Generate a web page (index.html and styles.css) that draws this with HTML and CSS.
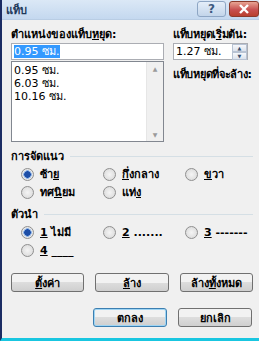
FILE: index.html
```html
<!DOCTYPE html>
<html lang="th">
<head>
    <meta charset="UTF-8">
    <title>แท็บ</title>
    <link rel="stylesheet" href="styles.css">
</head>
<body>
    <div class="window">
        <!-- แถบชื่อ -->
        <div class="titlebar">
            <span class="title">แท็บ</span>
            <div class="caption-btns">
                <div class="cap-btn help">?</div>
                <div class="cap-btn close">
                    <svg width="14" height="10" viewBox="0 0 14 10"><path d="M3 1 L11 9 M11 1 L3 9" stroke="#fff" stroke-width="2.4"/></svg>
                </div>
            </div>
        </div>

        <div class="content">
            <div class="top">
                <div class="col-left">
                    <div class="label">ตำแหน่งของแท็บ<u>ห</u>ยุด:</div>
                    <div class="textbox"><span class="sel">0.95 ซม.</span></div>
                    <div class="listbox">
                        <div class="items">
                            <div>0.95 ซม.</div>
                            <div>6.03 ซม.</div>
                            <div>10.16 ซม.</div>
                        </div>
                        <div class="vscroll">
                            <span class="arr">&#9650;</span>
                            <span class="arr">&#9660;</span>
                        </div>
                    </div>
                </div>
                <div class="col-right">
                    <div class="label">แท็บหยุดเ<u>ริ่</u>มต้น:</div>
                    <div class="spinner">
                        <span class="val">1.27 ซม.</span>
                        <div class="spin-btns">
                            <div class="spin">&#9650;</div>
                            <div class="spin">&#9660;</div>
                        </div>
                    </div>
                    <div class="label clear-label">แท็บหยุดที่จะล้าง:</div>
                </div>
            </div>

            <div class="group-head"><span>การจัดแนว</span><div class="rule"></div></div>
            <div class="radios">
                <label class="radio"><span class="dot on"></span><span>ซ้า<u>ย</u></span></label>
                <label class="radio"><span class="dot"></span><span><u>กึ่</u>งกลาง</span></label>
                <label class="radio"><span class="dot"></span><span><u>ข</u>วา</span></label>
                <label class="radio"><span class="dot"></span><span>ทศ<u>นิ</u>ยม</span></label>
                <label class="radio"><span class="dot"></span><span>แท่<u>ง</u></span></label>
            </div>

            <div class="group-head second"><span>ตัวนำ</span><div class="rule"></div></div>
            <div class="radios">
                <label class="radio"><span class="dot on"></span><span><u>1</u> ไม่มี</span></label>
                <label class="radio"><span class="dot"></span><span><u>2</u> .......</span></label>
                <label class="radio"><span class="dot"></span><span><u>3</u> -------</span></label>
                <label class="radio"><span class="dot"></span><span><u>4</u> ____</span></label>
            </div>

            <div class="btn-row">
                <div class="btn"><span><u>ตั้</u>งค่า</span></div>
                <div class="btn"><span><u>ล้</u>าง</span></div>
                <div class="btn"><span>ล้าง<u>ทั้</u>งหมด</span></div>
            </div>
            <div class="btn-row end">
                <div class="btn focus">ตกลง</div>
                <div class="btn">ยกเลิก</div>
            </div>
        </div>
    </div>
</body>
</html>
```

FILE: styles.css
```css
* { margin: 0; padding: 0; box-sizing: border-box; }
body { width: 259px; height: 341px; overflow: hidden; font-family: Tahoma, "DejaVu Sans", "Noto Sans", sans-serif; font-size: 11px; color: #000; }
u { text-decoration: underline; }

.window { width: 259px; height: 341px; background: #f0f0f0; border-left: 2px solid #1b2c63; border-bottom: 3px solid #19c6e0; display: flex; flex-direction: column; }

.titlebar { height: 20px; background: linear-gradient(#dbe8f6, #c4d8ef); display: flex; align-items: center; justify-content: space-between; padding-left: 4px; border-bottom: 1px solid #b9cde4; }
.title { font-weight: bold; color: #1e395b; font-size: 11px; }
.caption-btns { display: flex; gap: 3px; align-self: flex-start; padding-top: 1px; }
.cap-btn { height: 16px; border-radius: 3px; display: flex; align-items: center; justify-content: center; }
.cap-btn.help { width: 29px; background: linear-gradient(#e4eef9, #c3d5ea); border: 1px solid #8ea6c4; color: #3c5a80; font-weight: bold; font-size: 12px; }
.cap-btn.close { width: 30px; background: linear-gradient(#e8a493, #c75050 55%, #b9402e); border: 1px solid #8b3a2c; }

.content { flex: 1; padding: 8px 6px 0 9px; display: flex; flex-direction: column; }

.top { display: flex; gap: 9px; }
.col-left { width: 153px; flex-shrink: 0; display: flex; flex-direction: column; }
.col-right { flex: 1; display: flex; flex-direction: column; }
.label { font-weight: bold; height: 14px; line-height: 14px; margin-bottom: 1px; white-space: nowrap; }
.col-right .label { letter-spacing: -0.3px; }

.textbox { height: 17px; border: 1px solid #abadb3; background: #fff; padding: 1px 2px; line-height: 13px; }
.sel { background: #3399ff; color: #fff; }

.listbox { height: 81px; margin-top: 1px; border: 1px solid #828790; background: #fff; display: flex; }
.items { flex: 1; padding: 2px 2px; line-height: 13px; }
.vscroll { width: 17px; background: #f0f0f0; border-left: 1px solid #e6e6e6; display: flex; flex-direction: column; justify-content: space-between; align-items: center; padding: 3px 0; }
.arr { font-size: 6px; color: #9a9a9a; }

.spinner { width: 75px; height: 17px; border: 1px solid #abadb3; background: #fff; display: flex; justify-content: space-between; }
.val { padding: 1px 2px; line-height: 13px; }
.spin-btns { width: 15px; display: flex; flex-direction: column; }
.spin { flex: 1; font-size: 5px; color: #3a4f6e; display: flex; align-items: center; justify-content: center; background: linear-gradient(#f6f8fb, #dbe2ec); border: 1px solid #b8c3d3; }
.clear-label { margin-top: 8px; }

.group-head { display: flex; align-items: center; gap: 6px; margin-top: 7px; font-weight: bold; height: 14px; }
.group-head.second { margin-top: 8px; }
.rule { flex: 1; height: 1px; border-top: 1px solid #d5dfe5; }

.radios { display: grid; grid-template-columns: 82px 82px 1fr; row-gap: 4px; padding: 4px 0 0 10px; }
.radio { display: flex; align-items: center; gap: 6px; font-weight: bold; height: 14px; white-space: nowrap; }
.dot { width: 13px; height: 13px; flex-shrink: 0; border-radius: 50%; border: 1px solid #8f8f8f; background: radial-gradient(#f4f4f4, #d6d6d6); display: inline-block; }
.dot.on { background: radial-gradient(circle, #1d4ea7 0 3px, #8fb4e6 3.5px 4px, #e8e8e8 4.5px); }

.btn-row { display: flex; gap: 11px; margin-top: 16px; }
.btn-row.end { justify-content: flex-end; margin-top: 16px; padding-right: 1px; }
.btn { width: 74px; height: 19px; border: 1px solid #707070; border-radius: 3px; background: linear-gradient(#f2f2f2 50%, #dddddd 50%, #cfcfcf); display: flex; align-items: center; justify-content: center; font-weight: bold; white-space: nowrap; }
.btn.focus { border-color: #3c7fb1; box-shadow: inset 0 0 0 1px #9fd5f4; }
```
